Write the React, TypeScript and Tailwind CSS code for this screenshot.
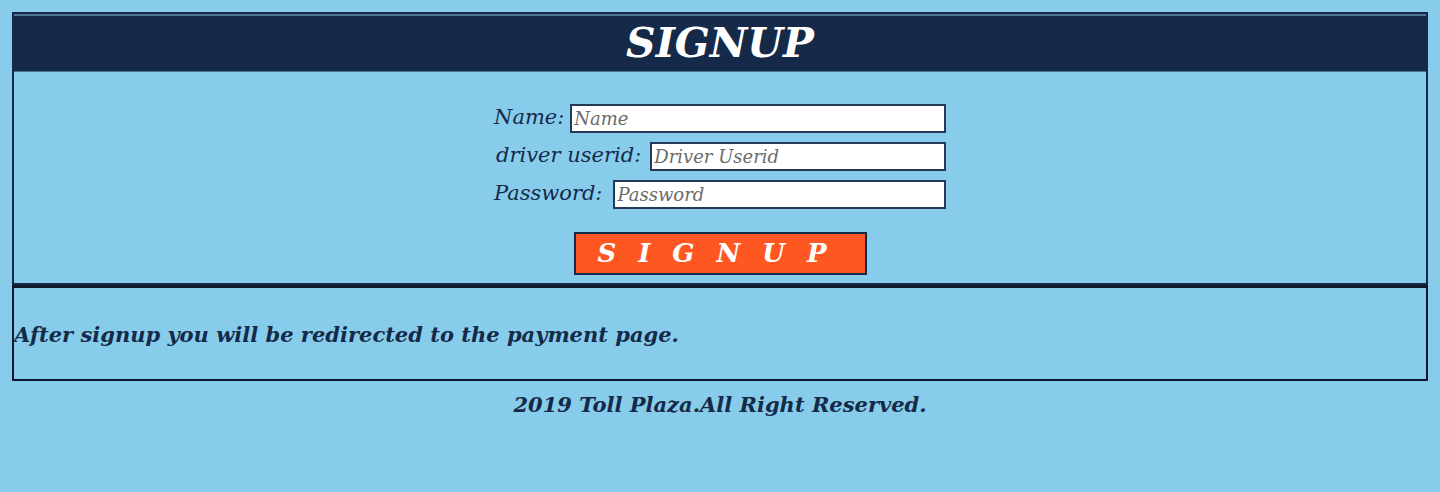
export default function App() {
  const serif = "font-['DejaVu_Serif','Liberation_Serif',serif] italic";
  return (
    <div className={`min-h-[492px] w-full bg-[#87cdeb] px-3 pt-3 text-[#152a48] ${serif}`}>
      <div className="border-2 border-[#152a48]">
        <div className="flex h-[58px] items-center justify-center border-t-2 border-b border-[#4f7396] bg-[#152a48]">
          <h1 className="text-[41px] font-bold leading-none text-white">SIGNUP</h1>
        </div>
        <form className="flex flex-col items-center border-b-2 border-[#152a48] pt-[32px] pb-[8px]">
          <div className="flex w-[452px] flex-col gap-[9px]">
            <label className="flex items-center gap-[6px] text-[21px] leading-none">
              <span className="-mt-[3px]">Name:</span>
              <input
                type="text"
                placeholder="Name"
                className="h-[29px] flex-1 border-2 border-[#243a58] bg-white px-[2px] text-[18px] italic placeholder:text-[#6b6b6b]"
              />
            </label>
            <label className="flex items-center gap-[9px] pl-[2px] text-[21px] leading-none">
              <span className="-mt-[3px]">driver userid:</span>
              <input
                type="text"
                placeholder="Driver Userid"
                className="h-[29px] flex-1 border-2 border-[#243a58] bg-white px-[2px] text-[18px] italic placeholder:text-[#6b6b6b]"
              />
            </label>
            <label className="flex items-center gap-[11px] text-[21px] leading-none">
              <span className="-mt-[3px]">Password:</span>
              <input
                type="password"
                placeholder="Password"
                className="h-[29px] flex-1 border-2 border-[#243a58] bg-white px-[2px] text-[18px] italic placeholder:text-[#6b6b6b]"
              />
            </label>
          </div>
          <button
            type="button"
            className="mt-[23px] h-[43px] w-[293px] border-2 border-[#152a48] bg-[#ff5722] pl-[6px] text-[26px] font-bold italic tracking-[22px] text-white"
          >
            SIGNUP
          </button>
        </form>
      </div>
      <div className="-mt-[2px] flex h-[96px] items-center border-2 border-t-[3px] border-[#0d1a2e] pt-[2px]">
        <p className="text-[21px] font-bold">After signup you will be redirected to the payment page.</p>
      </div>
      <p className="mt-[8px] text-center text-[21px] font-bold">2019 Toll Plaza.All Right Reserved.</p>
    </div>
  );
}
